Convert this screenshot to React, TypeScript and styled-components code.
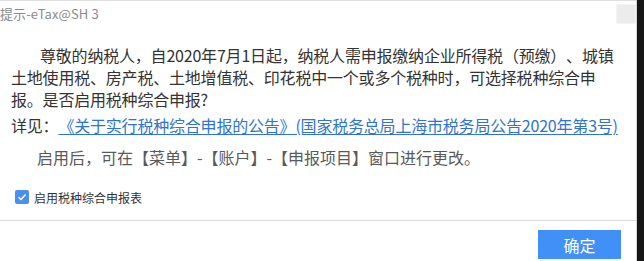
import React from "react";
import styled, { createGlobalStyle } from "styled-components";

const Global = createGlobalStyle`
  html, body { margin: 0; padding: 0; background: #ffffff; }
  body { font-family: "Noto Sans CJK SC", "Noto Sans", sans-serif; text-spacing-trim: space-all; }
`;

const Screen = styled.div`
  display: flex;
  width: 644px;
  height: 261px;
  overflow: hidden;
`;

const Dialog = styled.div`
  width: 636px;
  display: flex;
  flex-direction: column;
  background: #ffffff;
  border-right: 1px solid #d4d4d4;
`;

const Edge = styled.div`
  flex: 1;
  background: #161616;
`;

const TitleBar = styled.div`
  height: 27px;
  border-top: 1px solid #dedede;
  display: flex;
  align-items: flex-start;
  justify-content: space-between;
`;

const Title = styled.div`
  font-size: 13px;
  line-height: 26px;
  color: #8a8a8a;
  letter-spacing: 0.1px;
`;

const CloseBox = styled.div`
  width: 18px;
  height: 18px;
  margin-top: 3px;
  background: #ececec;
  border: 1px solid #f4f4f4;
`;

const Content = styled.div`
  flex: 1;
  padding: 16px 8px 0 11px;
  display: flex;
  flex-direction: column;
  border-bottom: 1px solid #dadada;
`;

const Paragraph = styled.p<{ $indent?: number; $color?: string; $mt?: number; $tight?: boolean }>`
  margin: ${(p) => p.$mt ?? 0}px 0 0 0;
  font-size: 16px;
  line-height: 22px;
  color: ${(p) => p.$color ?? "#333333"};
  text-indent: ${(p) => p.$indent ?? 0}px;
  letter-spacing: ${(p) => (p.$tight ? "-0.2px" : "0")};
  white-space: nowrap;
  text-spacing-trim: space-all;
`;

const Link = styled.a`
  color: #2f74d0;
  text-decoration: underline;
  text-underline-offset: 2px;
  cursor: pointer;
`;

const CheckRow = styled.label`
  display: flex;
  align-items: center;
  gap: 5px;
  margin: 21px 0 0 4px;
  height: 16px;
  font-size: 12px;
  color: #333333;
`;

const Box = styled.span`
  width: 14px;
  height: 14px;
  border-radius: 2px;
  background: #4a8ff0;
  display: flex;
  align-items: center;
  justify-content: center;
`;

const Footer = styled.div`
  height: 40px;
  display: flex;
  justify-content: flex-end;
  align-items: flex-start;
  padding: 9px 15px 0 0;
  box-sizing: border-box;
`;

const Button = styled.button`
  width: 83px;
  height: 29px;
  border: none;
  background: #4090f7;
  color: #ffffff;
  font-family: "Noto Sans CJK SC", sans-serif;
  font-size: 16px;
  padding: 0;
  cursor: pointer;
`;

export default function App() {
  return (
    <>
      <Global />
      <Screen>
        <Dialog>
          <TitleBar>
            <Title>提示-eTax@SH 3</Title>
            <CloseBox />
          </TitleBar>
          <Content>
            <Paragraph $indent={29} $tight>
              尊敬的纳税人，自2020年7月1日起，纳税人需申报缴纳企业所得税（预缴）、城镇
              <br />
              土地使用税、房产税、土地增值税、印花税中一个或多个税种时，可选择税种综合申
              <br />
              报。是否启用税种综合申报?
            </Paragraph>
            <Paragraph $mt={4} $tight>
              详见：<Link>《关于实行税种综合申报的公告》(国家税务总局上海市税务局公告2020年第3号)</Link>
            </Paragraph>
            <Paragraph $mt={10} $indent={26} $color="#5a5a5a">
              启用后，可在【菜单】-【账户】-【申报项目】窗口进行更改。
            </Paragraph>
            <CheckRow>
              <Box>
                <svg width="10" height="10" viewBox="0 0 10 10">
                  <path d="M1.5 5.2 L4 7.5 L8.6 2.6" fill="none" stroke="#ffffff" strokeWidth="1.5" />
                </svg>
              </Box>
              启用税种综合申报表
            </CheckRow>
          </Content>
          <Footer>
            <Button>确定</Button>
          </Footer>
        </Dialog>
        <Edge />
      </Screen>
    </>
  );
}
